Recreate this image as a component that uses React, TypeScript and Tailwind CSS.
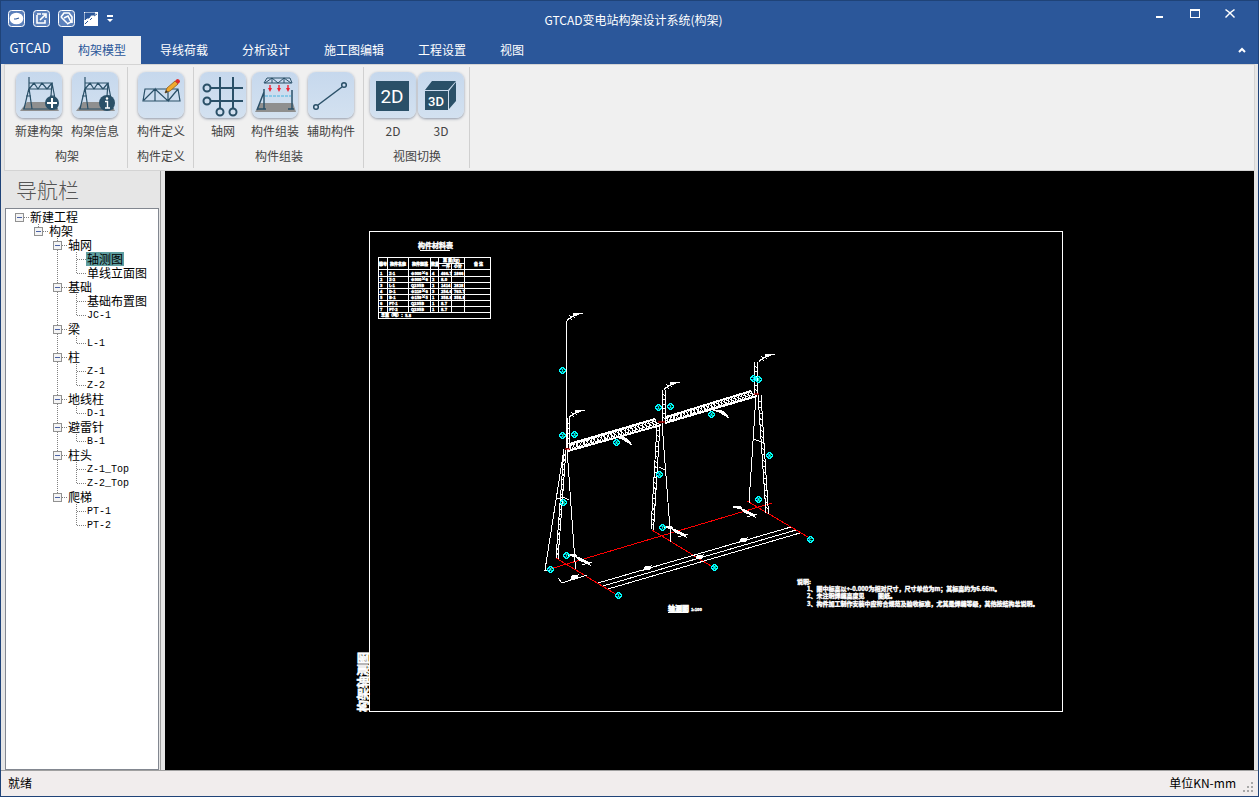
import { ReactNode, useState } from "react";

const INK = "#2a5068";

function Gantry() {
    return (
        <>
            <path d="M11 30H38L43 39H4Z" fill="#8f8f8f" />
            <path d="M13 5V16L8 37M13 16L16 37M10 24H15M36 11L34 37M36 11L41 37M34 24H39M13 11H37M13 17H36M13 17L18 11L22 17L26 11L31 17L36 11M7 37H41" fill="none" stroke={INK} strokeWidth="1.2" />
        </>
    );
}

const ribbonIcons: Record<string, ReactNode> = {
    create: (
        <>
            <Gantry />
            <circle cx="36" cy="31" r="7" fill={INK} />
            <path d="M31 31H41M36 26V36" stroke="#fff" strokeWidth="2" />
        </>
    ),
    info: (
        <>
            <Gantry />
            <circle cx="35" cy="31" r="8" fill={INK} />
            <path d="M33 29.5H35.5V36M33 36H38" stroke="#fff" strokeWidth="1.4" fill="none" />
            <circle cx="35" cy="26.5" r="1.2" fill="#fff" />
        </>
    ),
    define: (
        <>
            <path d="M7 17H40L42 29H5ZM6 28L17 17V29M17 17L30 29V17M30 29L40 17" fill="none" stroke={INK} strokeWidth="1.2" />
            <path d="M27 21L29 16L37 9L40 12L32 19Z" fill="#f0a92e" stroke="#8a5a1c" strokeWidth="0.8" />
            <path d="M37 9L39 7Q42 7 42 10L40 12Z" fill="#e02b2b" />
            <path d="M27 21L28 18L30 20Z" fill="#333" />
        </>
    ),
    axis: (
        <g fill="none" stroke={INK} strokeWidth="2">
            <path d="M20 5V36M33 5V36M11 16H43M11 29H43" />
            <circle cx="20" cy="40" r="3.5" />
            <circle cx="33" cy="40" r="3.5" />
            <circle cx="7" cy="16" r="3.5" />
            <circle cx="7" cy="29" r="3.5" />
        </g>
    ),
    assemble: (
        <>
            <path d="M8 31H41L44 40H3Z" fill="#8f8f8f" />
            <path d="M12 11L15 6H38L40 11ZM13 11L20 6L26 11L32 6L39 11M20 6V11M32 6V11" fill="none" stroke={INK} />
            <path d="M18 13V17M27 13V17M36 13V17" stroke="#ee2233" strokeWidth="1.4" />
            <path d="M16 16H20L18 20ZM25 16H29L27 20ZM34 16H38L36 20Z" fill="#ee2233" />
            <path d="M13 24H39" stroke="#49b4e0" strokeDasharray="3 1" />
            <path d="M12 17V37M40 18V37M12 20L5 38M5 37H14M36 37H42" stroke={INK} strokeWidth="1.5" fill="none" />
        </>
    ),
    helper: (
        <g fill="none" stroke={INK} strokeWidth="1.5">
            <path d="M10 33L34 15" />
            <circle cx="8" cy="35" r="2.3" />
            <circle cx="36" cy="13" r="2.3" />
        </g>
    ),
    view2d: (
        <>
            <path d="M6 9H39V39H6Z" fill={INK} />
            <text x="22" y="31" textAnchor="middle" fill="#fff" fontSize="19" fontFamily="Roboto, sans-serif">2D</text>
        </>
    ),
    view3d: (
        <>
            <path d="M7 18L14 9H38L30 18ZM7 19H30V38H7ZM31 19L38 10V29L31 37Z" fill={INK} />
            <text x="18" y="34" textAnchor="middle" fill="#fff" fontSize="13" fontWeight="500" fontFamily="Roboto, sans-serif">3D</text>
        </>
    ),
};

const ribbonGroups = [
    { label: "构架", items: [{ icon: "create", label: "新建构架" }, { icon: "info", label: "构架信息" }] },
    { label: "构件定义", items: [{ icon: "define", label: "构件定义" }] },
    { label: "构件组装", items: [{ icon: "axis", label: "轴网" }, { icon: "assemble", label: "构件组装" }, { icon: "helper", label: "辅助构件" }] },
    { label: "视图切换", items: [{ icon: "view2d", label: "2D" }, { icon: "view3d", label: "3D" }] },
];

const tabs = ["构架模型", "导线荷载", "分析设计", "施工图编辑", "工程设置", "视图"];

// one letter per guide cell: "." blank, "|" pipe, "t" tee, "l" elbow, "b" first box, "m" middle box, "e" last box
const treeRows = [
    { guides: "b", label: "新建工程" },
    { guides: ".e", label: "构架" },
    { guides: "..m", label: "轴网" },
    { guides: "..|t", label: "轴测图" },
    { guides: "..|l", label: "单线立面图" },
    { guides: "..m", label: "基础" },
    { guides: "..|t", label: "基础布置图" },
    { guides: "..|l", label: "JC-1" },
    { guides: "..m", label: "梁" },
    { guides: "..|l", label: "L-1" },
    { guides: "..m", label: "柱" },
    { guides: "..|t", label: "Z-1" },
    { guides: "..|l", label: "Z-2" },
    { guides: "..m", label: "地线柱" },
    { guides: "..|l", label: "D-1" },
    { guides: "..m", label: "避雷针" },
    { guides: "..|l", label: "B-1" },
    { guides: "..m", label: "柱头" },
    { guides: "..|t", label: "Z-1_Top" },
    { guides: "..|l", label: "Z-2_Top" },
    { guides: "..e", label: "爬梯" },
    { guides: "...t", label: "PT-1" },
    { guides: "...l", label: "PT-2" },
];

function Guide({ kind }: { kind: string }) {
    const lines: Record<string, string> = {
        ".": "",
        "|": "M9.5 0V14",
        t: "M9.5 0V14M9.5 7.5H19",
        l: "M9.5 0V7.5H19",
        b: "M9.5 7.5H19",
        m: "M9.5 0V14M9.5 7.5H19",
        e: "M9.5 0V7.5H19",
    };
    return (
        <svg className="h-[14px] w-[19px] shrink-0" viewBox="0 0 19 14" shapeRendering="crispEdges">
            <path d={lines[kind]} fill="none" stroke="#808080" strokeDasharray="1 1" />
            {"bme".includes(kind) && (
                <>
                    <rect x="5.5" y="3.5" width="8" height="8" fill="#f4f4f4" stroke="#919191" />
                    <path d="M7 7.5H12" stroke="#4b63a7" />
                </>
            )}
        </svg>
    );
}

function Tree() {
    const [selected, setSelected] = useState("轴测图");
    return (
        <ul className="mr-px ml-1 min-h-0 grow overflow-hidden border border-[#828790] bg-white pt-px pl-1">
            {treeRows.map((row) => (
                <li key={row.label} className="flex h-[14px] items-center">
                    {row.guides.split("").map((g, i) => <Guide key={i} kind={g} />)}
                    <button
                        onClick={() => setSelected(row.label)}
                        className={`h-[14px] px-px whitespace-nowrap text-black ${/^[A-Z]/.test(row.label) ? "font-['Liberation_Mono',monospace] text-[10px] leading-4" : "text-xs leading-[14px]"} ${selected === row.label ? "bg-[#5f9ea0]" : ""}`}
                    >
                        {row.label}
                    </button>
                </li>
            ))}
        </ul>
    );
}

const bubbles = [
    [562, 370, "1"], [562, 435, "2"], [574, 434, "3"], [616, 442, "4"], [658, 407, "1"], [670, 406, "1"],
    [711, 414, "4"], [753, 378, "2"], [758, 379, "3"], [769, 455, "6"], [659, 474, "5"], [662, 527, "7"],
    [758, 499, "8"], [810, 539, "C"], [714, 567, "B"], [563, 502, "5"], [566, 555, "7"], [550, 569, "A"], [618, 595, "1"],
] as const;

// lattice beam between two chords, zigzagged in n bays
function Beam({ top, bottom, n }: { top: number[]; bottom: number[]; n: number }) {
    const at = (c: number[], t: number) => [c[0] + (c[2] - c[0]) * t, c[1] + (c[3] - c[1]) * t];
    let d = "";
    for (let i = 0; i < n; i++) {
        d += `M${at(top, i / n)}L${at(bottom, (i + 0.5) / n)}L${at(top, (i + 1) / n)}`;
        d += `M${at(bottom, i / n)}L${at(top, (i + 0.5) / n)}L${at(bottom, (i + 1) / n)}`;
    }
    return (
        <g shapeRendering="crispEdges">
            <path d={d} />
            <path d={`M${top[0]} ${top[1]}L${top[2]} ${top[3]}M${bottom[0]} ${bottom[1]}L${bottom[2]} ${bottom[3]}`} strokeWidth="2" />
        </g>
    );
}

// two close rails with rungs, used for masts and columns
function Ladder({ a, b, n }: { a: number[]; b: number[]; n: number }) {
    let d = `M${a[0]} ${a[1]}L${a[2]} ${a[3]}M${b[0]} ${b[1]}L${b[2]} ${b[3]}`;
    for (let i = 1; i < n; i++) {
        const t = i / n;
        d += `M${a[0] + (a[2] - a[0]) * t} ${a[1] + (a[3] - a[1]) * t}L${b[0] + (b[2] - b[0]) * t} ${b[1] + (b[3] - b[1]) * t + 1}`;
    }
    return <path d={d} />;
}

const levelMarks = [[567, 321], [569, 418], [664, 390], [759, 362]];
const footMarks = [[570, 555], [666, 527], [735, 507]];
const beamMarks = [[617, 437], [714, 410]];
const dimMarks = [[574, 577], [647, 568], [699, 557], [743, 540]];

const materialRows = [
    ["1", "Z-1", "Φ300×6", "4", "466.7", "1866"],
    ["2", "Z-2", "Φ300×6", "2", "8.0", ""],
    ["3", "L-1", "Q235B", "2", "1414", "2828"],
    ["4", "D-1", "Φ219×6", "3", "254.6", "763.7"],
    ["5", "B-1", "Φ159×5", "1", "358.8", "358.8"],
    ["6", "PT-1", "Q235B", "1", "8.7", ""],
    ["7", "PT-2", "Q235B", "1", "8.7", ""],
];
const materialColumns = [380, 389, 411, 432, 441, 454];

function Drawing() {
    return (
        <svg className="h-full w-full" viewBox="165 171 1089 599" fill="none" stroke="#fff" strokeWidth="1">
            <g shapeRendering="crispEdges">
                <rect x="369.5" y="231.5" width="693" height="480" />
                <path d="M420 250.5H450M378.5 257.5H490.5V318.5H378.5ZM387.5 257V312M408.5 257V312M430.5 257V312M438.5 257V312M451.5 263V312M464.5 257V312M438 263.5H464M378 269.5H490M378 276.5H490M378 282.5H490M378 288.5H490M378 294.5H490M378 300.5H490M378 306.5H490M378 312.5H490" />
            </g>

            <g fill="#fff" stroke="#fff" strokeWidth="0.4" fontSize="4" fontWeight="700">
                <text x="418" y="248" fontSize="7">构件材料表</text>
                <text x="379" y="266">编号</text>
                <text x="390" y="266">构件名称</text>
                <text x="412" y="266">构件规格</text>
                <text x="431" y="266">数量</text>
                <text x="443" y="262">重 量(kg)</text>
                <text x="442" y="268">一件</text>
                <text x="454" y="268">小计</text>
                <text x="474" y="266">备 注</text>
                {materialRows.map((row, r) =>
                    row.map((cell, c) => <text key={`${r}-${c}`} x={materialColumns[c]} y={275 + r * 6}>{cell}</text>)
                )}
                <text x="381" y="317">总重（吨）：5.8</text>
                <text x="668" y="611" fontSize="7" strokeWidth="0.6">轴测图</text>
                <text x="691" y="611" fontSize="4">1:100</text>
                <text x="797" y="584" fontSize="6">说明:</text>
                <text x="807" y="591" fontSize="6">1、图中标高以+-0.000为相对尺寸，尺寸单位为m；其标高约为6.66m。</text>
                <text x="807" y="598" fontSize="6">2、未注明焊缝高度见</text>
                <text x="878" y="598" fontSize="6">图纸。</text>
                <text x="807" y="606" fontSize="6">3、构件加工制作安装中应符合规范及验收标准，尤其是焊缝等级，其他按结构总说明。</text>
                <text transform="translate(368 712) rotate(-90)" fontSize="12" strokeWidth="0.6">构架轴测图</text>
            </g>
            <path d="M668 612.5H688" shapeRendering="crispEdges" />

            <g stroke="#f00" shapeRendering="crispEdges">
                <path d="M550 569L772 503M556 558L617 595M652 530L711 566M747 501L808 537" />
            </g>

            <g shapeRendering="crispEdges">
                <path d="M566.5 321V448" />
                <Ladder a={[567, 418, 567, 448]} b={[569.5, 418, 569.5, 448]} n={6} />
                <Ladder a={[662.5, 390, 662.5, 422]} b={[665.5, 390, 665.5, 422]} n={7} />
                <Ladder a={[754.5, 362, 754.5, 394]} b={[757.5, 362, 757.5, 394]} n={7} />
                <path d="M564 449L545 570H550M567 449L575.5 569M662 423L671 542M756 395L749 503M557 499L563 497L569 500M659 467L665 470M753 439L762 442" />
                <Ladder a={[564, 449, 556, 558]} b={[566, 450, 558, 559]} n={22} />
                <Ladder a={[657, 425, 651, 529]} b={[660, 425, 653.5, 530]} n={20} />
                <Ladder a={[758, 395, 766, 513]} b={[761, 395, 768.5, 514]} n={20} />
                <path d="M598 583L791 527M603 586L796 530M608 589L800 533M558 578L562 583L587 575" />
            </g>
            <Beam top={[569, 444, 655, 419]} bottom={[568, 451, 661, 425]} n={13} />
            <Beam top={[666, 417, 751, 391]} bottom={[665, 423, 757, 396]} n={13} />
            <path d="M565 449H570M658 422H665M754 394H759" stroke="#f00" />

            {levelMarks.map(([x, y]) => (
                <path key={x} transform={`translate(${x} ${y})`} fill="#fff" shapeRendering="crispEdges" d="M0 0L2 -3L4 -2L3 -5L7 -4L6 -7L10 -8L16 -8L12 -7L7 -5" />
            ))}
            {footMarks.map(([x, y]) => (
                <path key={x} transform={`translate(${x} ${y})`} fill="#fff" shapeRendering="crispEdges" d="M-2 0L5 -1L7 2L12 4L18 7L20 10L14 7L9 5L6 1L2 1ZM12 10L22 7" />
            ))}
            {beamMarks.map(([x, y]) => (
                <path key={x} transform={`translate(${x} ${y})`} fill="#fff" shapeRendering="crispEdges" d="M-1 0L7 0L11 3L15 8L10 5L5 2Z" />
            ))}
            {dimMarks.map(([x, y]) => (
                <path key={x} transform={`translate(${x} ${y})`} fill="#fff" shapeRendering="crispEdges" d="M-3 2L-2 -1L4 -2L3 1Z" />
            ))}

            {bubbles.map(([x, y, name], i) => (
                <g key={i} stroke="#0ff">
                    <circle cx={x + 0.5} cy={y + 0.5} r="2.8" shapeRendering="crispEdges" />
                    <text x={x + 0.5} y={y + 2} textAnchor="middle" fill="#0ff" strokeWidth="0.4" fontSize="4">{name}</text>
                </g>
            ))}
        </svg>
    );
}

function QuickAccess() {
    return (
        <div className="flex items-center gap-2 pl-[7px] text-white">
            {[
                "",
                "M4 5V13H12V10M4 4H8M7 10L12 5M9 4H13V8",
                "M3 7L6 3H11L14 7V13M3 7L9 13M6 8L10 6L13 12L9 14",
            ].map((d, i) => (
                <button key={i} aria-label={["新建", "打开", "保存"][i]}>
                    <svg className="size-[17px]" viewBox="0 0 17 17" fill="none" stroke="currentColor" strokeWidth="1.6">
                        <rect x="0.5" y="0.5" width="16" height="16" rx="3" strokeWidth="1" fill="#5b80bb" />
                        {i === 0 ? <><ellipse cx="8.5" cy="8.5" rx="6" ry="5" fill="#fff" /><path d="M6 9L8 9L11 8" stroke="#2b579a" strokeWidth="1.2" /></> : <path d={d} />}
                    </svg>
                </button>
            ))}
            <button aria-label="视图">
                <svg className="h-[14px] w-4" viewBox="0 0 16 14">
                    <path d="M1 0H15V14H1Z" fill="#fff" />
                    <path d="M2 8V1H12L11 3L8 3L6 6L4 6ZM2 12L5 9M7 8L9 6M11 4L14 2" fill="#2b579a" stroke="#2b579a" />
                </svg>
            </button>
            <button aria-label="自定义快速访问工具栏">
                <svg className="h-2 w-[6px]" viewBox="0 0 6 8" fill="currentColor"><path d="M0 0H6V2H0ZM0 4H6L3 7Z" /></svg>
            </button>
        </div>
    );
}

export default function App() {
    const [activeTab, setActiveTab] = useState("构架模型");

    return (
        <div className="flex h-screen flex-col border border-[#1f4378] bg-[#e6e6e6] font-['Noto_Sans_CJK_SC',sans-serif] text-xs text-[#444]">
            <header className="shrink-0 bg-[#2b579a] text-white">
                <div className="grid h-[35px] grid-cols-[1fr_auto_1fr]">
                    <QuickAccess />
                    <h1 className="self-center pt-0.5 pl-2">GTCAD变电站构架设计系统(构架)</h1>
                    <div className="flex h-[26px] justify-end pr-[11px]">
                        {["M1 7H8V9H1Z", "M0 0H10V9H0ZM1 2V8H9V2Z", "M1 0L5 3L9 0L10 1L6 4L10 8L9 9L5 5L1 9L0 8L4 4L0 1Z"].map((d, i) => (
                            <button key={i} aria-label={["最小化", "最大化", "关闭"][i]} className="flex w-[35px] items-center justify-center">
                                <svg className="h-[10px] w-[10px]" viewBox="0 0 10 10" fill="currentColor" fillRule="evenodd"><path d={d} /></svg>
                            </button>
                        ))}
                    </div>
                </div>
                <nav className="flex h-7 items-stretch gap-1">
                    <button className="w-[58px] pb-1 text-[13px]">GTCAD</button>
                    {tabs.map((tab) => (
                        <button
                            key={tab}
                            onClick={() => setActiveTab(tab)}
                            className={`px-[15px] ${tab === activeTab ? "bg-[#f0f0f0] text-[#2b579a]" : "text-white"}`}
                        >
                            {tab}
                        </button>
                    ))}
                    <button aria-label="折叠功能区" className="ml-auto px-3">
                        <svg className="h-[6px] w-2" viewBox="0 0 8 6" fill="none" stroke="currentColor" strokeWidth="2"><path d="M1 5L4 2L7 5" /></svg>
                    </button>
                </nav>
            </header>

            <section className="mx-[3px] flex h-[107px] shrink-0 border border-[#d4d4d4] bg-[#f0f0f0] py-0.5 pl-px">
                {ribbonGroups.map((group) => (
                    <div key={group.label} className="flex flex-col items-center justify-between border-r border-[#d0d0d0] pr-1 pl-[5px]">
                        <div className="flex pt-[5px]">
                            {group.items.map((item) => (
                                <button key={item.label} className={`flex flex-col items-center gap-1 ${item.label.length > 2 ? "w-14" : "w-12"}`}>
                                    <svg className="size-[46px] rounded-lg bg-linear-to-b from-[#c6d8ed] to-[#d3e1f0] shadow-sm shadow-gray-400" viewBox="0 0 46 46">
                                        {ribbonIcons[item.icon]}
                                    </svg>
                                    <span className="leading-[18px]">{item.label}</span>
                                </button>
                            ))}
                        </div>
                        <div className="pb-[3px] leading-[18px]">{group.label}</div>
                    </div>
                ))}
            </section>

            <main className="flex min-h-0 grow">
                <aside className="flex w-[160px] shrink-0 flex-col border-r border-[#a0a0a0]">
                    <h2 className="h-[37px] shrink-0 pl-[15px] text-[21px] leading-9 font-light text-[#555]">导航栏</h2>
                    <Tree />
                </aside>
                <div className="mx-1 min-w-0 grow bg-black">
                    <Drawing />
                </div>
            </main>

            <footer className="flex h-[26px] shrink-0 items-center border-t border-[#a0a0a0] bg-[#f1eded] pr-1 pb-0.5 pl-[7px] text-black">
                <span>就绪</span>
                <span className="ml-auto">单位KN-mm</span>
                <svg className="ml-1.5 size-3 self-end" viewBox="0 0 12 12" fill="#a8a8a8">
                    <path d="M9 0H11V2H9ZM5 4H7V6H5ZM9 4H11V6H9ZM1 8H3V10H1ZM5 8H7V10H5ZM9 8H11V10H9Z" />
                </svg>
            </footer>
        </div>
    );
}
